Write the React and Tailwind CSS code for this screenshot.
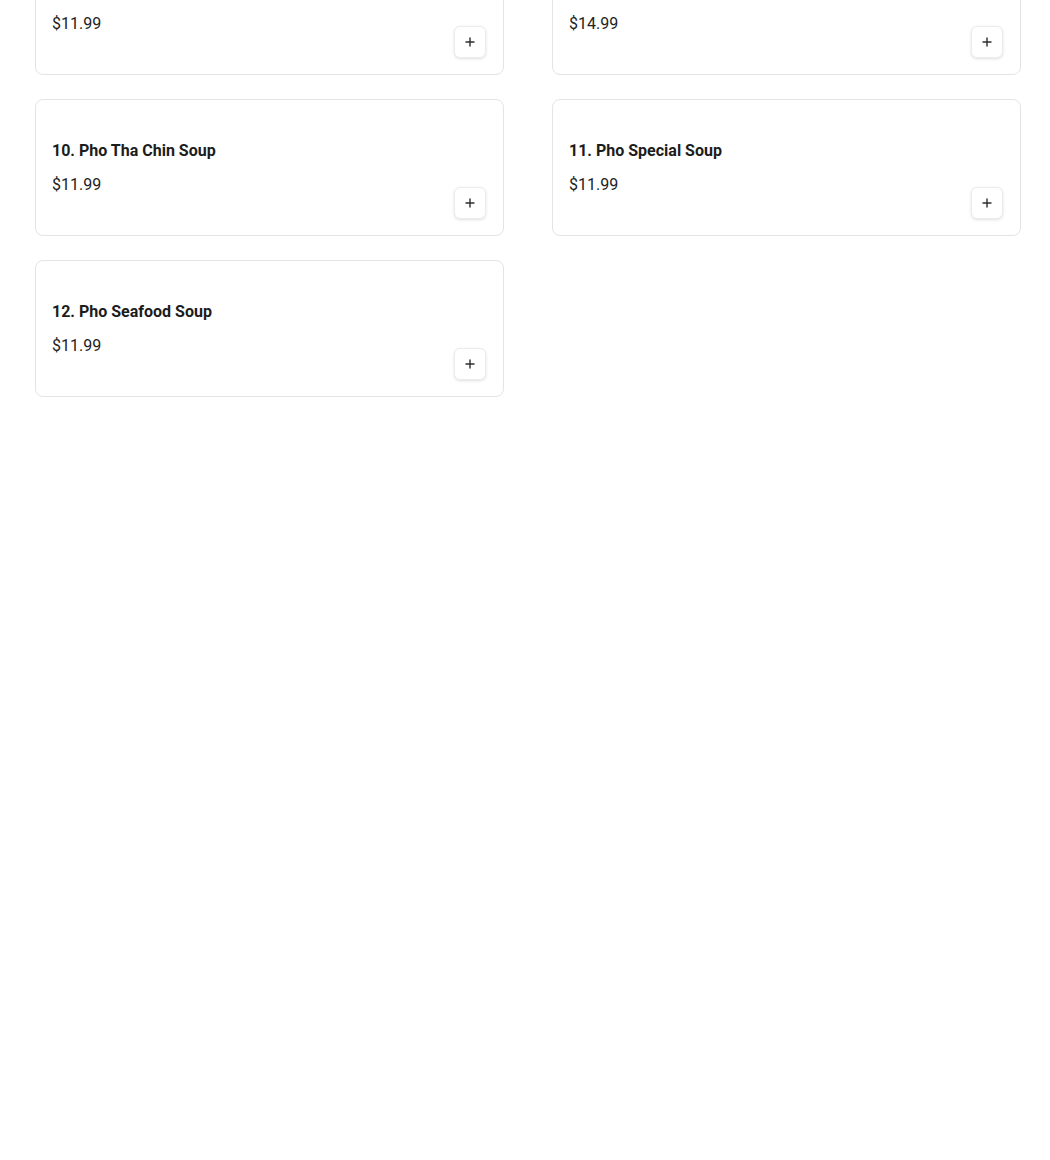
import React from "react";

const items = [
  { name: "", price: "$11.99" },
  { name: "", price: "$14.99" },
  { name: "10. Pho Tha Chin Soup", price: "$11.99" },
  { name: "11. Pho Special Soup", price: "$11.99" },
  { name: "12. Pho Seafood Soup", price: "$11.99" },
];

function PlusIcon() {
  return (
    <svg width="12" height="12" viewBox="0 0 12 12" fill="none" stroke="#2e2e2e" strokeWidth="1.4" strokeLinecap="round">
      <path d="M6 2v8M2 6h8" />
    </svg>
  );
}

export default function App() {
  return (
    <div className="min-h-[1160px] bg-white overflow-hidden" style={{ fontFamily: "Roboto, 'Liberation Sans', sans-serif" }}>
      <div className="grid grid-cols-2 gap-x-12 gap-y-6 w-[986px] ml-[35px] mt-[-62px]">
        {items.map((it, i) => (
          <div key={i} className="flex justify-between items-end rounded-lg border border-[#e4e4e4] bg-white p-4">
            <div className="pt-[23px] pb-[22px]">
              <h3 className="text-base leading-6 font-bold text-[#1c1c1c] h-6">{it.name}</h3>
              <p className="mt-[10px] text-base leading-6 text-[#222222]">{it.price}</p>
            </div>
            <button className="w-8 h-8 mr-px flex items-center justify-center rounded-md border border-[#ececec] bg-white shadow-[0_1px_3px_rgba(0,0,0,0.12)]">
              <PlusIcon />
            </button>
          </div>
        ))}
      </div>
    </div>
  );
}
